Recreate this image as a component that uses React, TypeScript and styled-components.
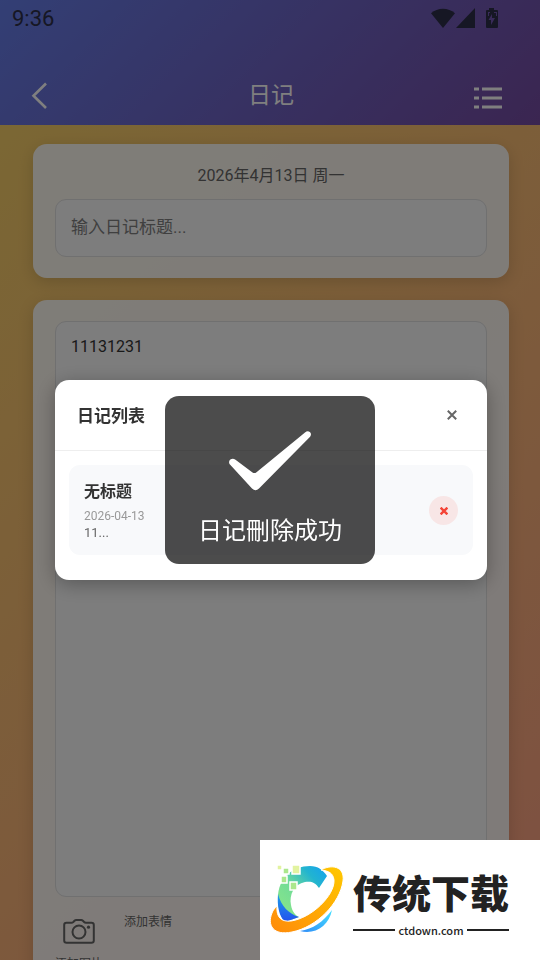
import React, { useState } from "react";
import styled, { createGlobalStyle } from "styled-components";

const GlobalStyle = createGlobalStyle`
  * { box-sizing: border-box; }
  body {
    margin: 0;
    font-family: Roboto, "Noto Sans CJK SC", sans-serif;
    color: #333;
  }
  button, input, textarea { font-family: inherit; }
  button { border: 0; padding: 0; background: none; cursor: pointer; }
  h1, h2, h3, p { margin: 0; }
`;

const Page = styled.div`
  height: 100vh;
  overflow: hidden;
  display: flex;
  flex-direction: column;
  background: linear-gradient(135deg, #f6d365 0%, #fda085 100%);
`;

const TopArea = styled.header`
  flex: none;
  background: linear-gradient(135deg, #667eea 0%, #764ba2 100%);
`;

const StatusBar = styled.div`
  display: flex;
  align-items: center;
  justify-content: space-between;
  height: 36px;
  padding: 0 42px 0 12px;
  font-size: 22px;
  color: #2c2e48;
`;

const StatusIcons = styled.div`
  display: flex;
  align-items: center;
`;

const NavBar = styled.nav`
  display: grid;
  grid-template-columns: 48px 1fr 36px;
  align-items: center;
  height: 89px;
  padding: 30px 38px 0 28px;
`;

const NavTitle = styled.h1`
  font-size: 23px;
  line-height: 30px;
  font-weight: 400;
  color: #fff;
  text-align: center;
`;

const IconButton = styled.button<{ $end?: boolean }>`
  display: flex;
  align-items: center;
  justify-content: ${(p) => (p.$end ? "flex-end" : "flex-start")};
  height: 36px;
  color: #fff;
`;

const Content = styled.main`
  flex: none;
  display: flex;
  flex-direction: column;
  gap: 22px;
  padding: 19px 31px 22px 33px;
`;

const Card = styled.section`
  display: flex;
  flex-direction: column;
  padding: 21px 22px;
  border-radius: 14px;
  background: rgba(255, 255, 255, 0.9);
  box-shadow: 0 4px 16px rgba(0, 0, 0, 0.15);
`;

const DateText = styled.p`
  margin-bottom: 13px;
  font-size: 16px;
  line-height: 21px;
  text-align: center;
  color: #666;
`;

const fieldStyles = `
  width: 100%;
  border: 1px solid #e0e0e0;
  border-radius: 11px;
  background: #fafafa;
  color: #333;
  outline: none;
`;

const TitleInput = styled.input`
  ${fieldStyles}
  height: 58px;
  padding: 0 15px 3px;
  font-size: 17px;
  &::placeholder { color: #808080; opacity: 1; }
`;

const BodyInput = styled.textarea`
  ${fieldStyles}
  height: 576px;
  padding: 12px 15px;
  font-size: 16px;
  line-height: 26px;
  resize: none;
`;

const Tools = styled.div`
  display: flex;
  align-items: flex-start;
  gap: 21px;
  padding-top: 15px;
`;

const Tool = styled.button<{ $withIcon?: boolean }>`
  display: flex;
  flex-direction: column;
  align-items: center;
  gap: 10px;
  padding-top: ${(p) => (p.$withIcon ? "6px" : "0")};
  font-size: 12px;
  line-height: 20px;
  color: #666;
`;

const Overlay = styled.div<{ $dim?: boolean }>`
  position: fixed;
  inset: 0;
  display: flex;
  align-items: center;
  justify-content: center;
  padding: ${(p) => (p.$dim ? "0 53px 0 55px" : "0")};
  background: ${(p) => (p.$dim ? "rgba(0, 0, 0, 0.5)" : "transparent")};
  pointer-events: ${(p) => (p.$dim ? "auto" : "none")};
`;

const Dialog = styled.div`
  width: 100%;
  border-radius: 14px;
  background: #fff;
  box-shadow: 0 4px 20px rgba(0, 0, 0, 0.3);
`;

const DialogHeader = styled.div`
  display: flex;
  align-items: center;
  justify-content: space-between;
  height: 71px;
  padding: 0 22px;
  border-bottom: 1px solid #eee;
`;

const DialogTitle = styled.h2`
  padding-top: 2px;
  font-size: 17px;
  line-height: 24px;
  font-weight: 700;
`;

const CloseButton = styled.button`
  display: flex;
  align-items: center;
  justify-content: center;
  width: 26px;
  height: 28px;
  color: #666;
`;

const EntryList = styled.ul`
  margin: 0;
  padding: 14px 14px 25px;
  list-style: none;
`;

const Entry = styled.li`
  display: flex;
  align-items: center;
  justify-content: space-between;
  padding: 15px 15px 14px;
  border-radius: 11px;
  background: #f8f9fb;
`;

const EntryTitle = styled.h3`
  margin-bottom: 4px;
  font-size: 16px;
  line-height: 24px;
  font-weight: 700;
`;

const EntryText = styled.p<{ $small?: boolean }>`
  font-size: ${(p) => (p.$small ? "12px" : "13px")};
  line-height: ${(p) => (p.$small ? "17px" : "16px")};
  color: ${(p) => (p.$small ? "#999" : "#666")};
`;

const DeleteButton = styled.button`
  display: flex;
  align-items: center;
  justify-content: center;
  width: 29px;
  height: 29px;
  border-radius: 50%;
  background: #f8e6e6;
  color: #f44336;
`;

const Toast = styled.div`
  display: flex;
  flex-direction: column;
  align-items: center;
  justify-content: space-between;
  width: 210px;
  height: 168px;
  padding: 34px 0 16px;
  border-radius: 14px;
  background: rgba(0, 0, 0, 0.7);
  color: #fff;
  font-size: 24px;
  line-height: 34px;
`;

const Watermark = styled.a`
  position: fixed;
  right: 0;
  bottom: 0;
  display: flex;
  align-items: center;
  gap: 8px;
  width: 280px;
  height: 120px;
  padding-left: 9px;
  background: #fff;
  color: #222;
  text-decoration: none;
`;

const Brand = styled.div`
  display: flex;
  flex-direction: column;
  width: 156px;
  padding-top: 2px;
`;

const BrandName = styled.div`
  font-family: "Noto Sans CJK SC", sans-serif;
  font-size: 39px;
  line-height: 58px;
  font-weight: 900;
  white-space: nowrap;
`;

const BrandSite = styled.div`
  display: flex;
  align-items: center;
  gap: 3px;
  font-family: "Noto Sans CJK SC", sans-serif;
  font-size: 11px;
  line-height: 20px;
  font-weight: 500;
  &::before, &::after {
    content: "";
    flex: 1;
    height: 2px;
    background: #222;
  }
`;

const Wifi = () => (
  <svg width="24" height="20" viewBox="0 0 24 20" fill="currentColor" aria-hidden="true">
    <path d="M0 5.2C6.600-.8 17.400-.8 24 5.200L12 20z" />
  </svg>
);

const Signal = () => (
  <svg width="21" height="20" viewBox="0 0 21 20" fill="currentColor" aria-hidden="true">
    <path d="M20 0v20H1z" />
  </svg>
);

const Battery = () => (
  <svg width="22" height="20" viewBox="0 0 22 20" fill="currentColor" aria-hidden="true">
    <path
      fillRule="evenodd"
      d="M13 0h5v2h3q1 0 1 1v16q0 1-1 1H11q-1 0-1-1V3q0-1 1-1h2zM16 6l-3.500 6h2.500v5l4-7h-3zM12 4v4h1V5h1V4zM18 4v1h2v3h1V4z"
    />
  </svg>
);

const Back = () => (
  <svg width="24" height="28" viewBox="0 0 24 28" fill="none" stroke="currentColor" strokeWidth="2.600" aria-hidden="true">
    <path d="M18 1.500L5.500 13.800 18 26" />
  </svg>
);

const ListIcon = () => (
  <svg width="28" height="26" viewBox="0 0 28 26" fill="currentColor" aria-hidden="true">
    <path d="M0 4.500h5v3H0zM8 4.500h20v3H8zM0 13.500h5v3H0zM8 13.500h20v3H8zM0 22.500h5v3H0zM8 22.500h20v3H8z" />
  </svg>
);

const Camera = () => (
  <svg width="34" height="26" viewBox="0 0 34 26" fill="none" stroke="currentColor" strokeWidth="2" aria-hidden="true">
    <path d="M4.500 4.800h5q1 0 1.800-.8l1.200-1.300Q13.200 2 14.200 2h5q1 0 1.700.7L22.100 4q.7.800 1.800.8h5.600q2.300 0 2.300 2.300v15.400q0 2.300-2.300 2.300h-25q-2.300 0-2.300-2.300V7.100q0-2.300 2.300-2.300z" />
    <circle cx="17" cy="14" r="6.500" />
    <circle cx="26.500" cy="9.200" r="1.600" fill="currentColor" stroke="none" />
  </svg>
);

const Cross = ({ size, weight }: { size: number; weight: number }) => (
  <svg width={size} height={size} viewBox="0 0 10 10" stroke="currentColor" strokeWidth={weight} aria-hidden="true">
    <path d="M.8.8l8.400 8.400M9.200.8L.8 9.200" />
  </svg>
);

const Check = () => (
  <svg width="84" height="62" viewBox="0 0 84 62" fill="#fff" aria-hidden="true">
    <path d="M1.500 34Q.2 31 2.700 29.300 5 28 7.500 29.800L24.500 42.500q2 1.300 4-.300L77 2.500Q79.500.5 81.800 2q2.200 2 .3 4.700L31 58.500q-3.500 3.500-7 0z" />
  </svg>
);

const Logo = () => (
  <svg width="76" height="72" viewBox="0 0 76 72" aria-hidden="true">
    <defs>
      <linearGradient id="ring" x1="0" y1="1" x2="1" y2="0">
        <stop offset="0" stopColor="#ff8a0a" />
        <stop offset="1" stopColor="#ffc800" />
      </linearGradient>
      <linearGradient id="arc" x1="0" y1="1" x2="1" y2="0">
        <stop offset="0" stopColor="#8fe886" />
        <stop offset="0.45" stopColor="#72dc96" />
        <stop offset="0.75" stopColor="#22b4d0" />
        <stop offset="1" stopColor="#14a0f0" />
      </linearGradient>
      <linearGradient id="tail" x1="0" y1="1" x2="1" y2="0">
        <stop offset="0" stopColor="#2f8cf8" />
        <stop offset="1" stopColor="#45e0ff" />
      </linearGradient>
      <linearGradient id="blue" x1="0" y1="0" x2="0" y2="1">
        <stop offset="0" stopColor="#1c9de8" />
        <stop offset="1" stopColor="#2450ee" />
      </linearGradient>
    </defs>
    <path d="M41 2C49 2 54 6 58 12L50 24C46 18 42 17 36 18 25 20 20 31 22 41 23 47 26 51 30 53L16 58C10 52 9 40 9 34 9 14 24 2 41 2z" fill="url(#arc)" />
    <path d="M9 30C12 42 20 50 30 53L16 58C10 52 8 42 9 30z" fill="url(#blue)" />
    <path d="M63 46C60 62 46 71 31 67 44 65 54 58 63 46z" fill="url(#tail)" />
    <path
      d="M52 6C62 0 76 2 74 17 71 39 48 63 23 68 4 72-2 61 3 49 4 46 6 44 8 42 7 54 13 58 22 57 43 54 66 31 65 16 64 9 60 7 52 6z"
      fill="url(#ring)"
      stroke="#fff"
      strokeWidth="1"
    />
    <g stroke="#fff" strokeWidth="1.500">
      <path d="M23 1h8v9h-8z" fill="#e2f3a0" />
      <path d="M14 4h6v6h-6zM12 12h6v7h-6zM21 18h7v8h-7z" fill="#abe78c" />
      <path d="M8 1h5v5H8z" fill="#e2f3a0" />
    </g>
  </svg>
);

export default function App() {
  const [title, setTitle] = useState("");
  const [body, setBody] = useState("11131231");

  return (
    <>
      <GlobalStyle />
      <Page>
        <TopArea>
          <StatusBar>
            <span>9:36</span>
            <StatusIcons>
              <Wifi />
              <Signal />
              <Battery />
            </StatusIcons>
          </StatusBar>
          <NavBar>
            <IconButton aria-label="返回"><Back /></IconButton>
            <NavTitle>日记</NavTitle>
            <IconButton $end aria-label="日记列表"><ListIcon /></IconButton>
          </NavBar>
        </TopArea>
        <Content>
          <Card>
            <DateText>2026年4月13日 周一</DateText>
            <TitleInput
              aria-label="日记标题"
              placeholder="输入日记标题..."
              value={title}
              onChange={(e) => setTitle(e.target.value)}
            />
          </Card>
          <Card>
            <BodyInput aria-label="日记内容" value={body} onChange={(e) => setBody(e.target.value)} />
            <Tools>
              <Tool $withIcon>
                <Camera />
                添加图片
              </Tool>
              <Tool>添加表情</Tool>
            </Tools>
          </Card>
        </Content>
      </Page>
      <Overlay $dim>
        <Dialog role="dialog" aria-labelledby="dialog-title">
          <DialogHeader>
            <DialogTitle id="dialog-title">日记列表</DialogTitle>
            <CloseButton aria-label="关闭"><Cross size={10} weight={2} /></CloseButton>
          </DialogHeader>
          <EntryList>
            <Entry>
              <div>
                <EntryTitle>无标题</EntryTitle>
                <EntryText $small>2026-04-13</EntryText>
                <EntryText>11...</EntryText>
              </div>
              <DeleteButton aria-label="删除"><Cross size={8} weight={3} /></DeleteButton>
            </Entry>
          </EntryList>
        </Dialog>
      </Overlay>
      <Overlay>
        <Toast role="status">
          <Check />
          <span>日记刪除成功</span>
        </Toast>
      </Overlay>
      <Watermark href="#">
        <Logo />
        <Brand>
          <BrandName>传统下载</BrandName>
          <BrandSite>ctdown.com</BrandSite>
        </Brand>
      </Watermark>
    </>
  );
}
